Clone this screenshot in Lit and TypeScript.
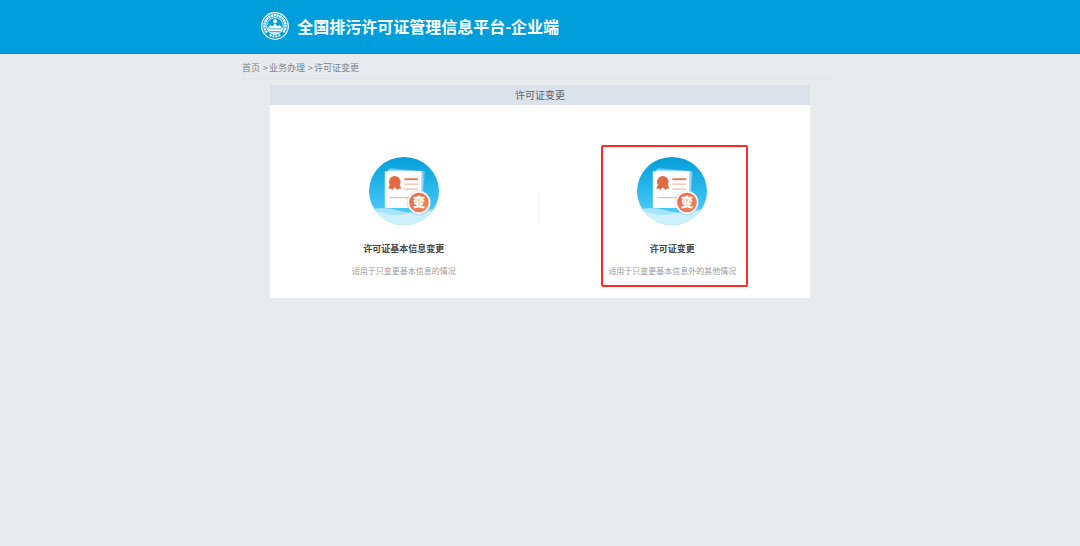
import { LitElement, html, css } from "lit";
import { customElement, property } from "lit/decorators.js";

const fontStack = css`"Noto Sans CJK SC", "Noto Sans", sans-serif`;

@customElement("platform-logo")
class PlatformLogo extends LitElement {
  static styles = css`
    :host { display: block; width: 28px; height: 28px; }
    svg { display: block; width: 100%; height: 100%; }
  `;
  render() {
    return html`<svg viewBox="0 0 28 28" fill="none" aria-hidden="true">
      <circle cx="14" cy="14" r="13.3" stroke="#fff" stroke-width="1.2" />
      <path d="M5.8 20.6A10.6 10.6 0 1 1 22.2 20.6" stroke="#fff" stroke-width="2.4" stroke-dasharray="2.2 .6" />
      <path d="M8.7 22.9Q14 26 19.3 22.9" stroke="#fff" stroke-width="2" stroke-dasharray="2 1" />
      <circle cx="14" cy="14" r="8.4" stroke="#fff" stroke-width=".9" />
      <circle cx="14" cy="9.2" r="2" fill="#fff" />
      <path d="M6.4 16.4l3-3.6 1.8 1.6L14 11.4l2.8 3 1.8-1.6 3 3.6z" fill="#fff" />
      <path d="M6.2 17.3h15.6l-1.2 2H7.4zM8.8 20.2h10.4Q14 24 8.8 20.2z" fill="#fff" />
    </svg>`;
  }
}

@customElement("permit-icon")
class PermitIcon extends LitElement {
  static styles = css`
    :host { display: block; width: 70px; height: 68px; }
    svg { display: block; width: 100%; height: 100%; }
    .mark { font: 700 12px ${fontStack}; fill: #fff; stroke: #fff; stroke-width: 0.4px; text-anchor: middle; }
  `;
  render() {
    return html`<svg viewBox="0 0 70 68" aria-hidden="true">
      <defs>
        <linearGradient id="sky" x1="0" y1="0" x2="0" y2="1">
          <stop offset="0" stop-color="#069fda" />
          <stop offset=".3" stop-color="#1caee5" />
          <stop offset=".78" stop-color="#48c7f7" />
          <stop offset="1" stop-color="#55cdfa" />
        </linearGradient>
        <linearGradient id="seal" x1="0" y1="0" x2="1" y2="1">
          <stop offset="0" stop-color="#e2683f" />
          <stop offset="1" stop-color="#ee8a6a" />
        </linearGradient>
        <clipPath id="disc"><ellipse cx="35" cy="34" rx="35" ry="34" /></clipPath>
      </defs>
      <g clip-path="url(#disc)">
        <rect width="70" height="68" fill="url(#sky)" />
        <path d="M0 53Q14 49 28 53T50 55Q60 51 70 53V68H0z" fill="#a6e4fc" />
        <path d="M0 55Q10 54 20 57.500Q30 59 40 56Q54 53 70 55V68H0z" fill="#cdf0fe" />
      </g>
      <path d="M20.500 11L56 14.500 52.500 52 18 48z" fill="#8fd5f2" opacity=".6" />
      <path d="M19 12.500L54 14 53.500 50 18 50z" fill="#bce6f7" opacity=".7" />
      <rect x="15.800" y="14" width="36.400" height="37" rx="1.500" fill="#fff" />
      <path d="M21.800 26l-2.600 5.600 2.800.2 1.400 1.200 2.400-3.600 2.400 3.600 1.400-1.200 2.800-.2-2.600-5.600z" fill="#e06a42" />
      <circle cx="25.800" cy="24.900" r="5.800" fill="#e06a42" />
      <path d="M35.300 22.200h13.900" stroke="#e37854" stroke-width="1.900" />
      <path d="M35.300 27.200h13.900M35.300 32.200h13.900M21 40.700h20" stroke="#f0bba8" stroke-width="1.300" />
      <circle cx="50" cy="45.800" r="12.500" fill="#7fc4e4" opacity=".35" />
      <circle cx="50" cy="45.500" r="11.400" fill="#fff7f3" />
      <circle cx="50" cy="45.500" r="9.800" fill="url(#seal)" />
      <text class="mark" x="50" y="50">变</text>
    </svg>`;
  }
}

@customElement("change-option")
class ChangeOption extends LitElement {
  @property() name = "";
  @property() hint = "";
  static styles = css`
    :host { display: block; }
    .option {
      display: flex; flex-direction: column; align-items: center;
      color: inherit; text-decoration: none; white-space: nowrap;
    }
    .name { margin-top: 16px; font-size: 9px; line-height: 16px; font-weight: 700; color: #444; }
    .hint { margin-top: 8px; font-size: 8px; line-height: 12px; color: #999; }
  `;
  render() {
    return html`<a class="option" href="#">
      <permit-icon></permit-icon>
      <span class="name">${this.name}</span>
      <span class="hint">${this.hint}</span>
    </a>`;
  }
}

@customElement("app-root")
class AppRoot extends LitElement {
  static styles = css`
    :host {
      display: block; min-height: 100vh; background: #e7ebee;
      font-family: ${fontStack};
    }
    .top { background: #009fdb; border-bottom: 1px solid #0a86dc; }
    .brand {
      display: flex; align-items: center; gap: 8px;
      box-sizing: border-box; width: 52%; height: 53px; margin: 0 auto;
      padding: 0 0 2px 2px;
    }
    .title { margin: 0; font-size: 16px; line-height: 24px; font-weight: 700; color: #fff; white-space: nowrap; }
    .page { width: 55%; margin: 0 auto; }
    .crumbs {
      display: flex; margin: 0 4px 0 -1px; padding: 6px 0 3px;
      border-bottom: 1px solid #dfe4e7;
      font-size: 9px; line-height: 15px; color: #7c8489;
    }
    .crumbs a { color: inherit; text-decoration: none; }
    .sep { margin: 0 1px 0 3px; }
    .panel { width: 50%; margin: 6px auto 0; background: #fff; }
    .heading {
      margin: 0; background: #dbe2e9; text-align: center;
      font-size: 10px; line-height: 20px; font-weight: 400; color: #59646b;
    }
    .options {
      display: grid; grid-template-columns: 1fr 1px 1fr; align-items: start;
      padding: 52px 4px 21px 0;
    }
    .divider { height: 30px; margin-top: 37px; background: #f3f3f3; }
    .marked { position: relative; }
    .frame {
      position: absolute; top: -12px; bottom: -10px; left: 50%;
      width: 143px; margin-left: -71px;
      border: 2px solid #ff2a20; border-radius: 2px; pointer-events: none;
    }
  `;
  render() {
    return html`
      <header class="top">
        <div class="brand">
          <platform-logo></platform-logo>
          <h1 class="title">全国排污许可证管理信息平台-企业端</h1>
        </div>
      </header>
      <div class="page">
        <nav class="crumbs">
          <a href="#">首页</a><span class="sep">&gt;</span><a href="#">业务办理</a><span class="sep">&gt;</span><a href="#">许可证变更</a>
        </nav>
      </div>
      <main class="panel">
        <h2 class="heading">许可证变更</h2>
        <div class="options">
          <change-option name="许可证基本信息变更" hint="适用于只变更基本信息的情况"></change-option>
          <div class="divider"></div>
          <div class="marked">
            <change-option name="许可证变更" hint="适用于只变更基本信息外的其他情况"></change-option>
            <div class="frame"></div>
          </div>
        </div>
      </main>
    `;
  }
}
